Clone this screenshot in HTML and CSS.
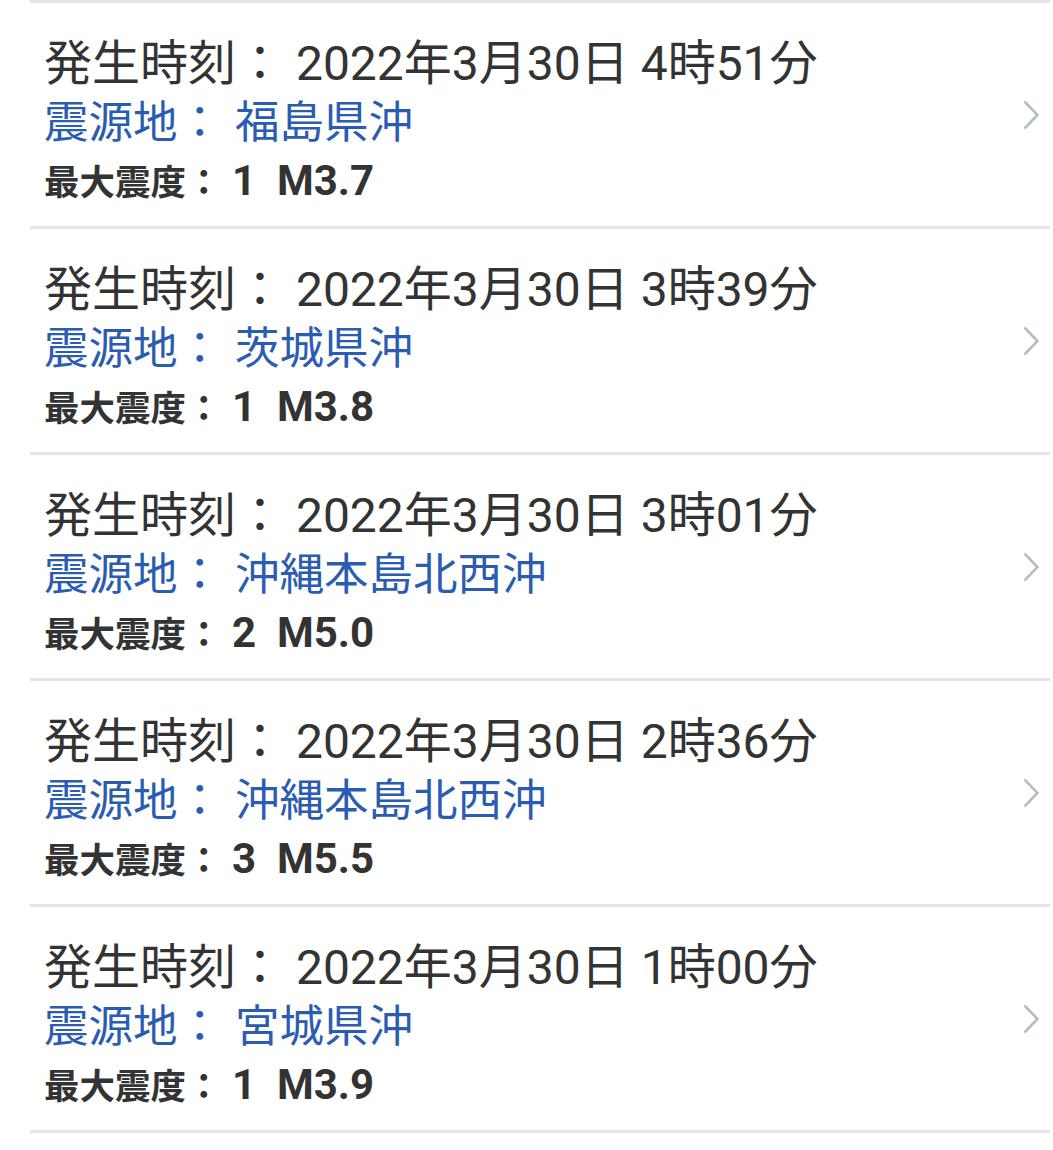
FILE: index.html
```html
<!DOCTYPE html>
<html lang="ja">
<head>
<meta charset="utf-8">
<link rel="stylesheet" href="styles.css">
</head>
<body>
<ul class="quake-list">
  <li class="quake">
    <div class="info">
      <div class="time">発生時刻： 2022年3月30日 4時51分</div>
      <div class="place">震源地： 福島県沖</div>
      <div class="scale">最大震度：<span class="num"> 1&nbsp;&nbsp;M3.7</span></div>
    </div>
    <svg class="chev" viewBox="0 0 16 30" width="16" height="30"><path d="M1.5 1.5 L14.5 15 L1.5 28.5" fill="none" stroke="#b4bdc8" stroke-width="2.6"/></svg>
  </li>
  <li class="quake">
    <div class="info">
      <div class="time">発生時刻： 2022年3月30日 3時39分</div>
      <div class="place">震源地： 茨城県沖</div>
      <div class="scale">最大震度：<span class="num"> 1&nbsp;&nbsp;M3.8</span></div>
    </div>
    <svg class="chev" viewBox="0 0 16 30" width="16" height="30"><path d="M1.5 1.5 L14.5 15 L1.5 28.5" fill="none" stroke="#b4bdc8" stroke-width="2.6"/></svg>
  </li>
  <li class="quake">
    <div class="info">
      <div class="time">発生時刻： 2022年3月30日 3時01分</div>
      <div class="place">震源地： 沖縄本島北西沖</div>
      <div class="scale">最大震度：<span class="num"> 2&nbsp;&nbsp;M5.0</span></div>
    </div>
    <svg class="chev" viewBox="0 0 16 30" width="16" height="30"><path d="M1.5 1.5 L14.5 15 L1.5 28.5" fill="none" stroke="#b4bdc8" stroke-width="2.6"/></svg>
  </li>
  <li class="quake">
    <div class="info">
      <div class="time">発生時刻： 2022年3月30日 2時36分</div>
      <div class="place">震源地： 沖縄本島北西沖</div>
      <div class="scale">最大震度：<span class="num"> 3&nbsp;&nbsp;M5.5</span></div>
    </div>
    <svg class="chev" viewBox="0 0 16 30" width="16" height="30"><path d="M1.5 1.5 L14.5 15 L1.5 28.5" fill="none" stroke="#b4bdc8" stroke-width="2.6"/></svg>
  </li>
  <li class="quake">
    <div class="info">
      <div class="time">発生時刻： 2022年3月30日 1時00分</div>
      <div class="place">震源地： 宮城県沖</div>
      <div class="scale">最大震度：<span class="num"> 1&nbsp;&nbsp;M3.9</span></div>
    </div>
    <svg class="chev" viewBox="0 0 16 30" width="16" height="30"><path d="M1.5 1.5 L14.5 15 L1.5 28.5" fill="none" stroke="#b4bdc8" stroke-width="2.6"/></svg>
  </li>
</ul>
</body>
</html>
```

FILE: styles.css
```css
html, body {
  margin: 0;
  padding: 0;
  background: #ffffff;
}
body {
  font-family: Roboto, "Noto Sans CJK JP", sans-serif;
  color: #333333;
}
.quake-list {
  list-style: none;
  margin: 0 3px 0 30px;
  padding: 0;
  border-top: 3px solid #e4e4e4;
}
.quake {
  display: flex;
  align-items: center;
  height: 223px;
  border-bottom: 3px solid #e4e4e4;
  padding: 0 11px 0 14px;
}
.info {
  flex: 1;
  display: flex;
  flex-direction: column;
  padding-top: 14px;
}
.time {
  font-size: 48px;
  line-height: 61px;
  color: #333333;
  white-space: nowrap;
}
.place {
  font-size: 44.5px;
  line-height: 59px;
  word-spacing: 2px;
  color: #2a5cb1;
  white-space: nowrap;
}
.scale {
  font-size: 35.5px;
  line-height: 56px;
  font-weight: 700;
  color: #333333;
  white-space: nowrap;
}
.num {
  font-size: 42px;
  line-height: 56px;
}
.chev {
  flex: none;
  display: block;
}
```
